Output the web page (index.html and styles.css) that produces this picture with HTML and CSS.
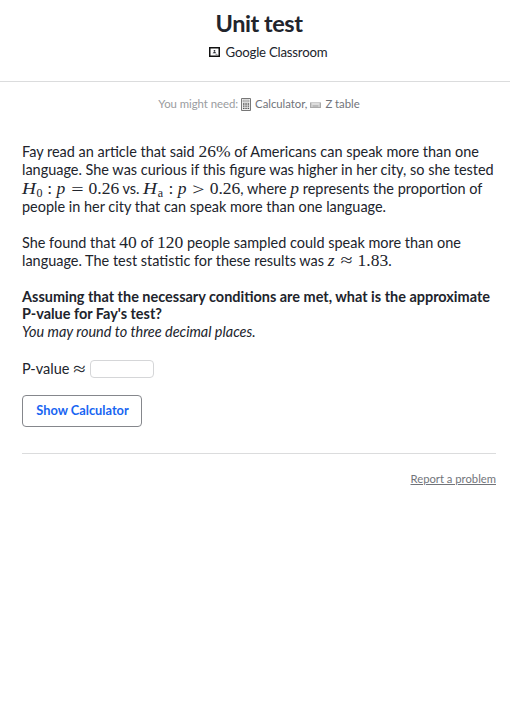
FILE: index.html
```html
<!DOCTYPE html>
<html lang="en">
<head>
<meta charset="utf-8">
<title>Unit test</title>
<link rel="stylesheet" href="styles.css">
</head>
<body>
<header class="header">
  <h1 class="title">Unit test</h1>
  <a class="classroom"><svg width="11" height="10" viewBox="0 0 11 10"><path d="M.75.75h9.5v8.5H.75z" fill="none" stroke="#111" stroke-width="1.5"/><circle cx="5.5" cy="3.8" r=".9" fill="#21242c"/><path d="M3.5 6.2q2-2.2 4 0z" fill="#21242c"/><path d="M6.5 7.7h2" stroke="#888"/></svg><span>Google Classroom</span></a>
</header>
<main class="main">
  <div class="tools"><span class="hint">You might need:</span><svg class="calc" width="10" height="13" viewBox="0 0 10 13"><path d="M.5.5h9v12h-9z" fill="#eee" stroke="#777"/><path d="M2 2h6v2H2z" fill="#ccc" stroke="#999" stroke-width=".5"/><path d="M2 6h1.5M4.3 6h1.5M6.6 6h1.5M2 8.2h1.5M4.3 8.2h1.5M6.6 8.2h1.5M2 10.4h1.5M4.3 10.4h1.5M6.6 10.4h1.5" stroke="#555" stroke-width="1.3"/></svg><span>Calculator,</span><svg class="ztable" width="11" height="6" viewBox="0 0 11 6"><path d="M0 0h11v6H0z" fill="#ccc"/><path d="M2 2h7" stroke="#eee"/><path d="M0 5.5h11M.5 1v5M10.5 1v5M3 4h5" stroke="#aaa"/></svg><span>Z table</span></div>
  <p class="para intro">Fay read an article that said <span class="math">26%</span> of Americans can speak more than one<br>language. She was curious if this figure was higher in her city, so she tested<br><span class="math hyp"><i class="cap">H</i><small>0</small><span class="colon">:</span><i class="var">p</i><span class="rel">=</span>0.26</span> vs. <span class="math hyp second"><i class="cap">H</i><small>a</small><span class="colon">:</span><i class="var">p</i><span class="rel">&gt;</span>0.26</span>, where <i class="math">p</i> represents the proportion of<br>people in her city that can speak more than one language.</p>
  <p class="para found">She found that <span class="math">40</span> of <span class="math">120</span> people sampled could speak more than one<br>language. The test statistic for these results was <span class="math"><i>z</i><span class="approx">≈</span>1.83</span>.</p>
  <p class="para question"><b>Assuming that the necessary conditions are met, what is the approximate<br>P-value for Fay's test?</b><br><em>You may round to three decimal places.</em></p>
  <div class="answer"><span>P-value</span><span class="approx2">≈</span><input class="field" type="text" aria-label="P-value"></div>
  <button class="button" type="button">Show Calculator</button>
  <footer class="footer"><a class="report">Report a problem</a></footer>
</main>
</body>
</html>
```
FILE: styles.css
```css
* { box-sizing: border-box; }
body { margin: 0; background: #fff; color: #21242c; font-family: Lato, sans-serif; }
.header { height: 82px; border-bottom: 1px solid #dbdcdd; text-align: center; padding: 9px 0 0 8px; }
.title { margin: 0; font-size: 23.5px; line-height: 28px; font-weight: 700; letter-spacing: -.45px; }
.classroom { display: flex; justify-content: center; align-items: center; gap: 6px; margin: 6px 0 0 18px; font-size: 13.2px; line-height: 18px; letter-spacing: -.2px; }
.main { width: 474px; margin-left: 22px; }
.tools { display: flex; justify-content: center; align-items: center; height: 18px; margin-top: 13px; padding-bottom: 1px; font-size: 11.4px; letter-spacing: -.05px; color: #71747a; }
.hint { color: #9a9ca0; }
.calc { margin: 2px 4px 0 3px; }
.ztable { margin: 2px 4px 0 3px; }
.para { margin: 0; font-size: 14.46px; line-height: 18.3px; white-space: nowrap; }
.intro { margin-top: 30px; }
.found { margin-top: 18px; }
.question { margin-top: 17px; line-height: 17.6px; }
.math { font-family: "Liberation Serif", serif; font-size: 17.5px; line-height: 1px; }
.hyp { display: inline-flex; align-items: baseline; }
.cap { width: 14.5px; transform: scaleX(1.1); transform-origin: left; }
.hyp small { width: 6.5px; font-size: 12px; position: relative; top: 3px; }
.colon { width: 13.5px; text-align: center; }
.var { width: 9px; }
.rel { width: 23px; text-align: center; transform: translateY(1px) scaleX(1.25); }
.approx { display: inline-block; width: 23px; text-align: center; transform: scaleX(1.25); }
.answer { display: flex; align-items: center; margin-top: 19px; height: 18px; font-size: 14.5px; }
.approx2 { font: 18px/18px "Liberation Serif", serif; width: 19px; text-align: center; transform: scaleX(1.25); margin-left: 1px; }
.field { width: 64px; height: 18px; border: 1px solid #d5d6d8; border-radius: 4px; padding: 0 4px; margin-left: 1px; }
.button { display: block; width: 120px; height: 32px; margin-top: 17px; padding: 0 0 1px 1px; border: 1px solid #85878c; border-radius: 4px; background: #fff; color: #1865f2; font: 700 12.8px/29px Lato, sans-serif; }
.footer { margin-top: 26px; border-top: 1px solid #dbdcdd; padding-top: 16px; text-align: right; font-size: 11.25px; line-height: 18px; }
.report { color: #71747a; text-decoration: underline; }
```
